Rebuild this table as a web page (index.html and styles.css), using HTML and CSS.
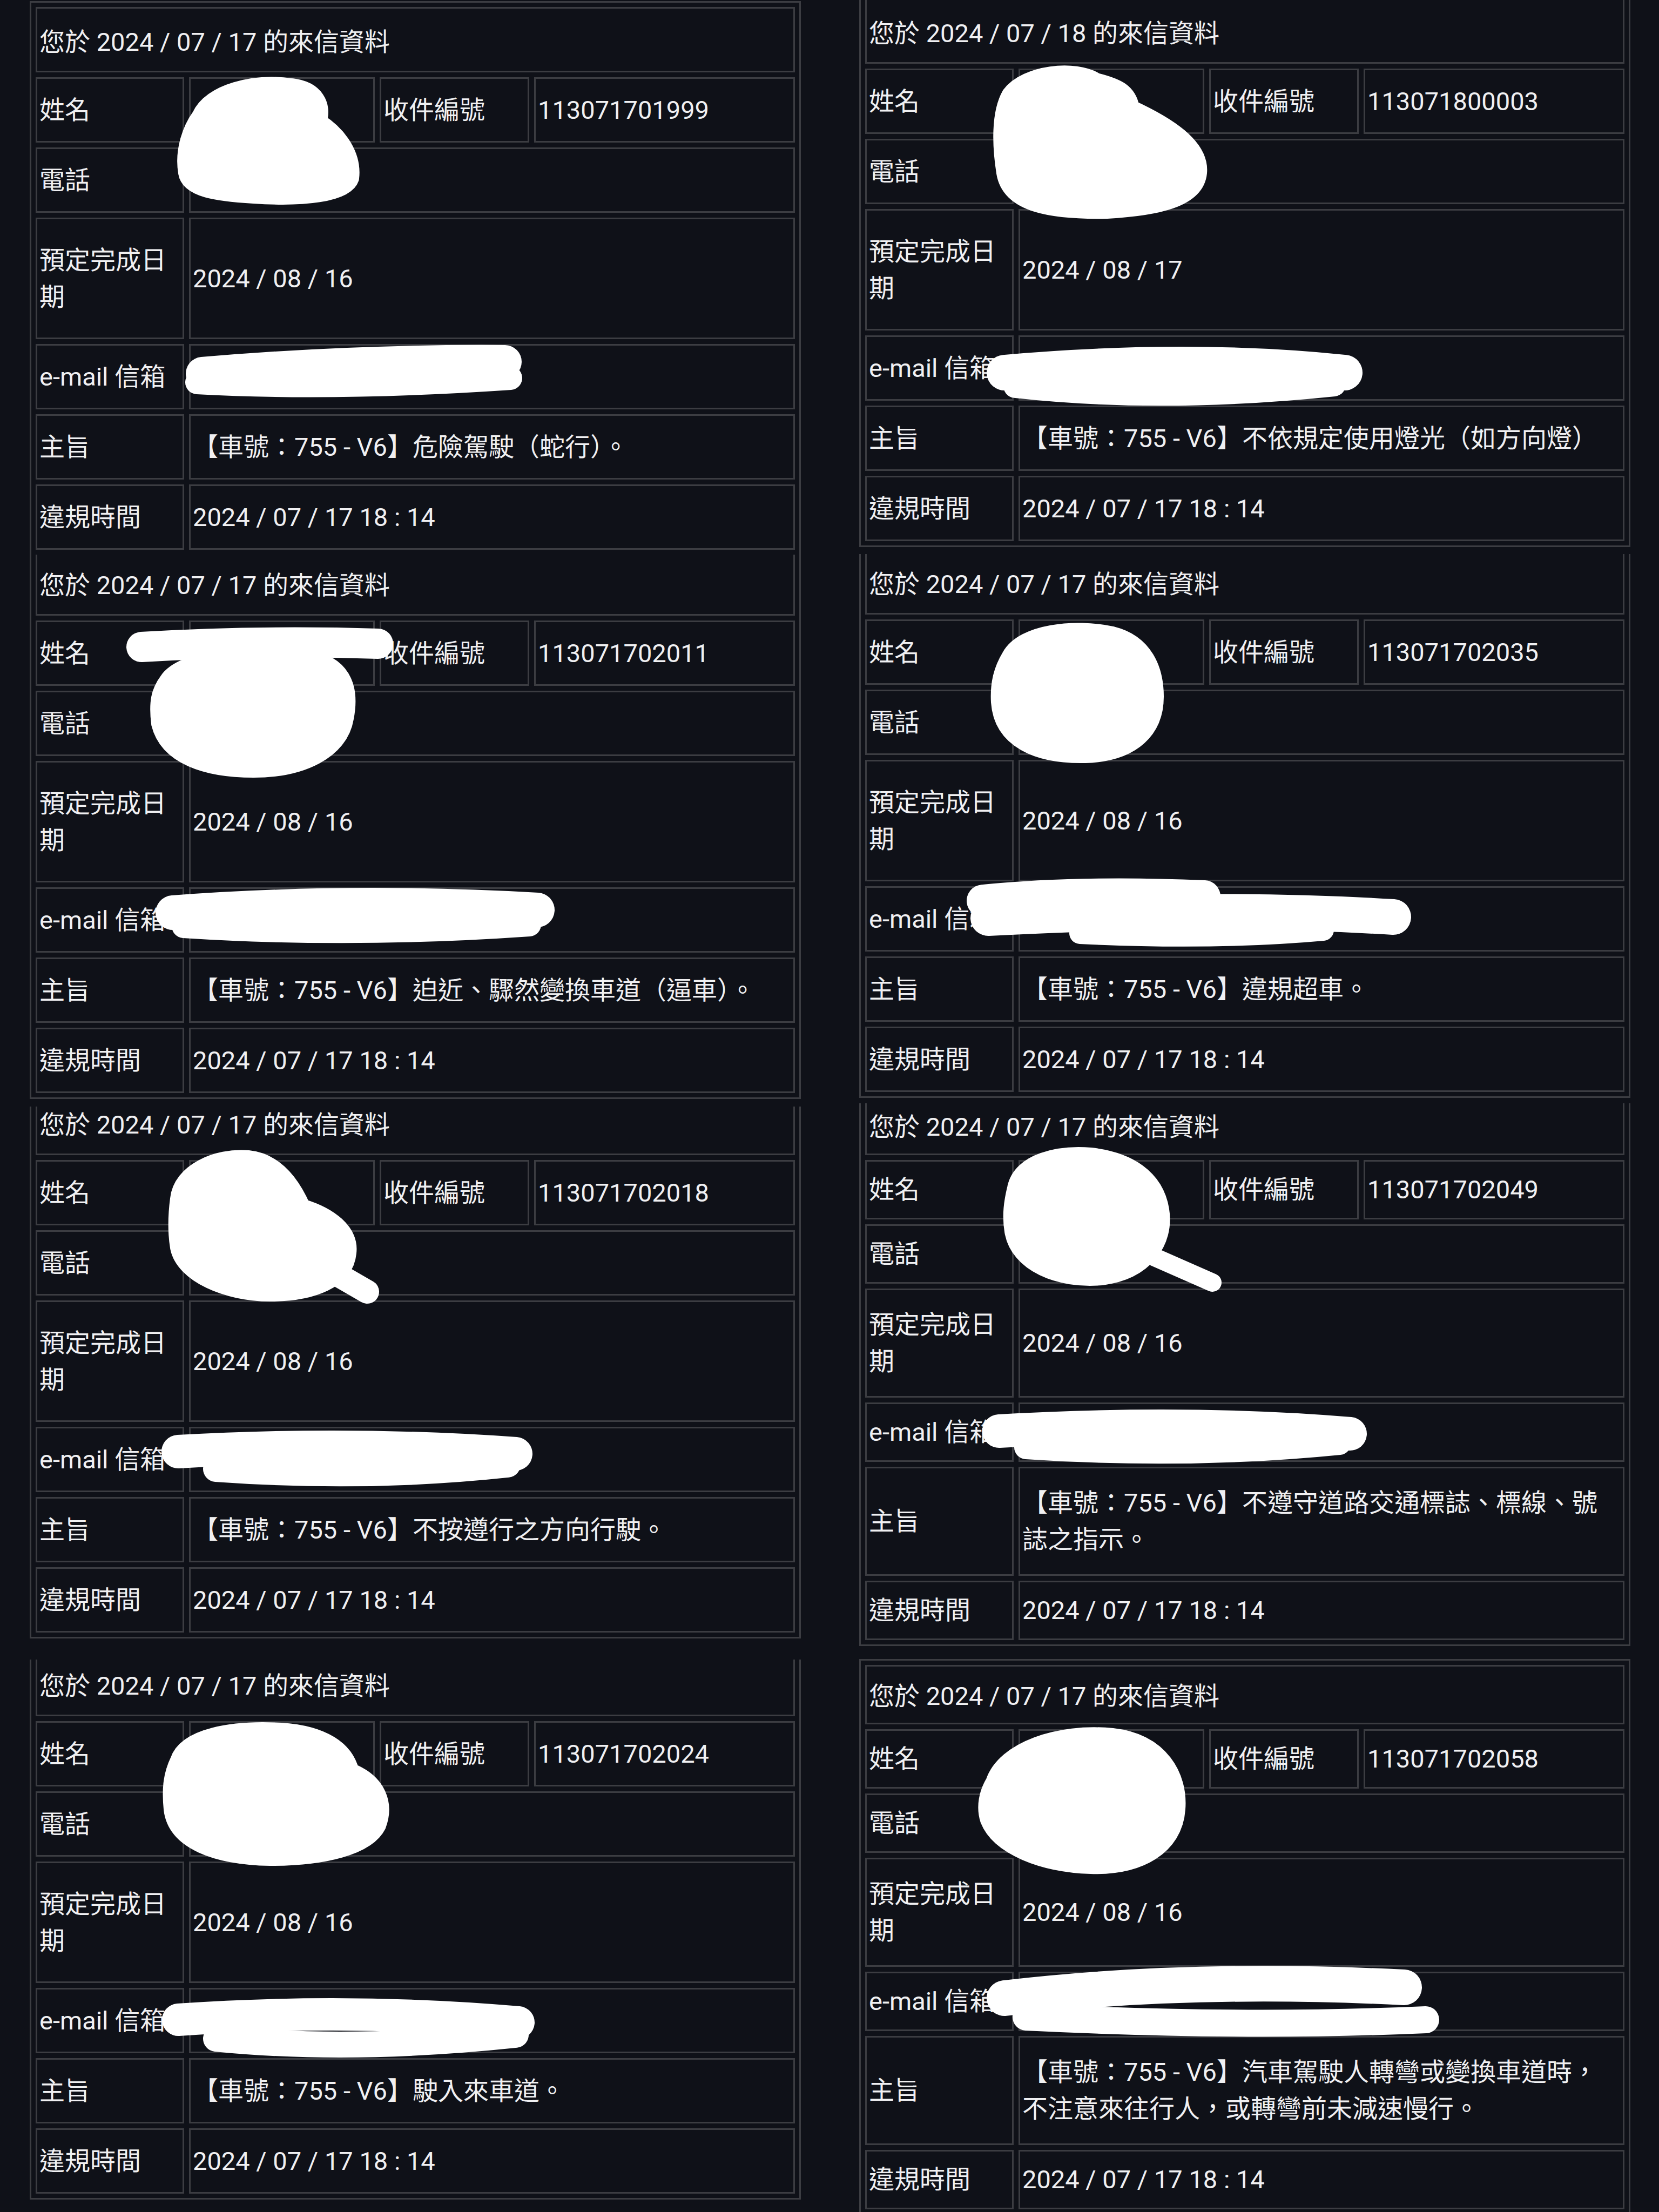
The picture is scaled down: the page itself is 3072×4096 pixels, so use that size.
FILE: index.html
```html
<!DOCTYPE html>
<html lang="zh-Hant">
<head>
<meta charset="utf-8">
<title>來信資料</title>
<link rel="stylesheet" href="styles.css">
</head>
<body>
<div class="page">
  <div class="col col-left">
    <section class="tbl">
      <div class="c title">您於 2024 / 07 / 17 的來信資料</div>
      <div class="c lab">姓名</div><div class="c"></div><div class="c">收件編號</div><div class="c">113071701999</div>
      <div class="c lab">電話</div><div class="c span"></div>
      <div class="c lab tall">預定完成日期</div><div class="c span">2024 / 08 / 16</div>
      <div class="c lab">e-mail 信箱</div><div class="c span"></div>
      <div class="c lab">主旨</div><div class="c span">【車號：755 - V6】危險駕駛（蛇行）。</div>
      <div class="c lab">違規時間</div><div class="c span">2024 / 07 / 17 18 : 14</div>

      <div class="c title cut t113">您於 2024 / 07 / 17 的來信資料</div>
      <div class="c lab">姓名</div><div class="c"></div><div class="c">收件編號</div><div class="c">113071702011</div>
      <div class="c lab">電話</div><div class="c span"></div>
      <div class="c lab tall">預定完成日期</div><div class="c span">2024 / 08 / 16</div>
      <div class="c lab">e-mail 信箱</div><div class="c span"></div>
      <div class="c lab">主旨</div><div class="c span">【車號：755 - V6】迫近、驟然變換車道（逼車）。</div>
      <div class="c lab">違規時間</div><div class="c span">2024 / 07 / 17 18 : 14</div>
    </section>

    <section class="tbl top-cut gap-b">
      <div class="c title cut t90">您於 2024 / 07 / 17 的來信資料</div>
      <div class="c lab">姓名</div><div class="c"></div><div class="c">收件編號</div><div class="c">113071702018</div>
      <div class="c lab">電話</div><div class="c span"></div>
      <div class="c lab tall">預定完成日期</div><div class="c span">2024 / 08 / 16</div>
      <div class="c lab">e-mail 信箱</div><div class="c span"></div>
      <div class="c lab">主旨</div><div class="c span">【車號：755 - V6】不按遵行之方向行駛。</div>
      <div class="c lab">違規時間</div><div class="c span">2024 / 07 / 17 18 : 14</div>
    </section>

    <section class="tbl top-cut gap-c">
      <div class="c title cut t105">您於 2024 / 07 / 17 的來信資料</div>
      <div class="c lab">姓名</div><div class="c"></div><div class="c">收件編號</div><div class="c">113071702024</div>
      <div class="c lab">電話</div><div class="c span"></div>
      <div class="c lab tall">預定完成日期</div><div class="c span">2024 / 08 / 16</div>
      <div class="c lab">e-mail 信箱</div><div class="c span"></div>
      <div class="c lab">主旨</div><div class="c span">【車號：755 - V6】駛入來車道。</div>
      <div class="c lab">違規時間</div><div class="c span">2024 / 07 / 17 18 : 14</div>
    </section>
  </div>

  <div class="col col-right">
    <section class="tbl top-cut">
      <div class="c title cut t118">您於 2024 / 07 / 18 的來信資料</div>
      <div class="c lab">姓名</div><div class="c"></div><div class="c">收件編號</div><div class="c">113071800003</div>
      <div class="c lab">電話</div><div class="c span"></div>
      <div class="c lab tall">預定完成日期</div><div class="c span">2024 / 08 / 17</div>
      <div class="c lab">e-mail 信箱</div><div class="c span"></div>
      <div class="c lab">主旨</div><div class="c span">【車號：755 - V6】不依規定使用燈光（如方向燈）</div>
      <div class="c lab">違規時間</div><div class="c span">2024 / 07 / 17 18 : 14</div>
    </section>

    <section class="tbl top-cut gap-e">
      <div class="c title cut t112">您於 2024 / 07 / 17 的來信資料</div>
      <div class="c lab">姓名</div><div class="c"></div><div class="c">收件編號</div><div class="c">113071702035</div>
      <div class="c lab">電話</div><div class="c span"></div>
      <div class="c lab tall">預定完成日期</div><div class="c span">2024 / 08 / 16</div>
      <div class="c lab">e-mail 信箱</div><div class="c span"></div>
      <div class="c lab">主旨</div><div class="c span">【車號：755 - V6】違規超車。</div>
      <div class="c lab">違規時間</div><div class="c span">2024 / 07 / 17 18 : 14</div>
    </section>

    <section class="tbl compact top-cut gap-f">
      <div class="c title cut t96">您於 2024 / 07 / 17 的來信資料</div>
      <div class="c lab">姓名</div><div class="c"></div><div class="c">收件編號</div><div class="c">113071702049</div>
      <div class="c lab">電話</div><div class="c span"></div>
      <div class="c lab tall">預定完成日期</div><div class="c span">2024 / 08 / 16</div>
      <div class="c lab">e-mail 信箱</div><div class="c span"></div>
      <div class="c lab tall">主旨</div><div class="c span"><span class="lines">【車號：755 - V6】不遵守道路交通標誌、標線、號<br>誌之指示。</span></div>
      <div class="c lab">違規時間</div><div class="c span">2024 / 07 / 17 18 : 14</div>
    </section>

    <section class="tbl compact gap-g">
      <div class="c title">您於 2024 / 07 / 17 的來信資料</div>
      <div class="c lab">姓名</div><div class="c"></div><div class="c">收件編號</div><div class="c">113071702058</div>
      <div class="c lab">電話</div><div class="c span"></div>
      <div class="c lab tall">預定完成日期</div><div class="c span">2024 / 08 / 16</div>
      <div class="c lab">e-mail 信箱</div><div class="c span"></div>
      <div class="c lab tall">主旨</div><div class="c span"><span class="lines">【車號：755 - V6】汽車駕駛人轉彎或變換車道時，<br>不注意來往行人，或轉彎前未減速慢行。</span></div>
      <div class="c lab">違規時間</div><div class="c span">2024 / 07 / 17 18 : 14</div>
    </section>
  </div>

  <svg class="scribbles" width="3072" height="4096" viewBox="0 0 3072 4096" aria-hidden="true">
    <g fill="#fff" stroke="#fff" stroke-linecap="round" stroke-linejoin="round">
      <!-- L1 name/phone -->
      <path stroke-width="30" d="M370 215 C390 170 470 150 540 160 C585 165 600 195 590 225 C630 250 655 290 650 330 C640 360 560 368 470 362 C400 358 350 350 345 320 C338 280 352 240 370 215 Z"/>
      <!-- L1 email -->
      <path fill="none" stroke-width="62" d="M375 692 Q650 668 935 670"/>
      <path fill="none" stroke-width="44" d="M365 708 Q620 722 945 700"/>
      <!-- R1 name/phone -->
      <path stroke-width="30" d="M1870 175 C1900 135 1990 125 2030 150 C2070 160 2090 170 2095 200 C2160 230 2225 270 2220 320 C2215 370 2140 385 2050 390 C1950 392 1870 380 1860 320 C1852 270 1850 210 1870 175 Z"/>
      <!-- R1 email -->
      <path fill="none" stroke-width="66" d="M1860 690 Q2200 660 2490 690"/>
      <path fill="none" stroke-width="44" d="M1880 715 Q2150 745 2470 712"/>
      <!-- L2 name/phone -->
      <path fill="none" stroke-width="56" d="M262 1198 Q480 1185 700 1192"/>
      <path stroke-width="30" d="M310 1260 C340 1215 480 1205 580 1220 C640 1235 650 1280 640 1330 C630 1390 560 1425 470 1425 C380 1425 310 1400 295 1340 C290 1300 295 1280 310 1260 Z"/>
      <!-- L2 email -->
      <path fill="none" stroke-width="64" d="M320 1690 Q650 1665 995 1685"/>
      <path fill="none" stroke-width="44" d="M340 1715 Q650 1735 980 1712"/>
      <!-- R2 name/phone -->
      <path stroke-width="30" d="M1870 1215 C1895 1170 1990 1160 2060 1175 C2120 1190 2140 1240 2140 1290 C2140 1350 2100 1395 2010 1398 C1920 1400 1855 1370 1850 1300 C1848 1265 1855 1240 1870 1215 Z"/>
      <!-- R2 email -->
      <path fill="none" stroke-width="60" d="M1820 1668 Q2000 1650 2230 1660"/>
      <path fill="none" stroke-width="66" d="M1830 1700 Q2250 1678 2580 1698"/>
      <path fill="none" stroke-width="40" d="M2000 1728 Q2250 1740 2450 1722"/>
      <!-- L3 name/phone -->
      <path stroke-width="30" d="M330 2220 C335 2170 400 2140 460 2145 C510 2150 540 2190 560 2235 C610 2250 650 2280 645 2320 C640 2370 580 2395 500 2395 C420 2395 340 2360 330 2310 C325 2280 326 2250 330 2220 Z"/>
      <path fill="none" stroke-width="44" d="M590 2340 L680 2392"/>
      <!-- L3 email -->
      <path fill="none" stroke-width="62" d="M330 2688 Q650 2670 955 2692"/>
      <path fill="none" stroke-width="48" d="M400 2720 Q680 2740 940 2712"/>
      <!-- R3 name/phone -->
      <path stroke-width="30" d="M1880 2200 C1890 2150 1960 2135 2020 2140 C2090 2148 2140 2180 2150 2240 C2160 2300 2120 2355 2040 2365 C1960 2372 1885 2340 1875 2280 C1870 2250 1874 2225 1880 2200 Z"/>
      <path fill="none" stroke-width="34" d="M2120 2320 L2245 2375"/>
      <!-- R3 email -->
      <path fill="none" stroke-width="62" d="M1850 2650 Q2200 2630 2500 2655"/>
      <path fill="none" stroke-width="44" d="M1900 2680 Q2200 2700 2480 2672"/>
      <!-- L4 name/phone -->
      <path stroke-width="30" d="M330 3260 C345 3215 430 3200 520 3205 C600 3210 640 3240 650 3280 C700 3300 715 3340 700 3380 C680 3420 600 3440 500 3440 C400 3438 325 3410 318 3350 C314 3310 318 3285 330 3260 Z"/>
      <!-- L4 email -->
      <path fill="none" stroke-width="60" d="M330 3740 Q650 3718 960 3745"/>
      <path fill="none" stroke-width="48" d="M400 3775 Q650 3800 955 3768"/>
      <!-- R4 name/phone -->
      <path stroke-width="30" d="M1840 3300 C1860 3240 1960 3205 2060 3215 C2150 3225 2185 3290 2180 3350 C2175 3420 2110 3458 2020 3455 C1930 3452 1850 3420 1830 3370 C1822 3345 1828 3320 1840 3300 Z"/>
      <!-- R4 email -->
      <path fill="none" stroke-width="66" d="M1860 3700 Q2200 3660 2600 3680"/>
      <path fill="none" stroke-width="50" d="M1900 3735 Q2300 3755 2640 3740"/>
    </g>
  </svg>
</div>
</body>
</html>
```

FILE: styles.css
```css
html, body {
  margin: 0;
  padding: 0;
  background: #0f1118;
}

.page {
  position: relative;
  width: 3072px;
  height: 4096px;
  overflow: hidden;
  display: flex;
  align-items: flex-start;
  gap: 108px;
  padding-left: 55px;
  box-sizing: border-box;
  font-family: Roboto, "Noto Sans CJK TC", "Noto Sans CJK SC", sans-serif;
  font-size: 47px;
  line-height: 68px;
  color: #f0f0f2;
}

.col {
  width: 1428px;
  display: flex;
  flex-direction: column;
}

.col-left { padding-top: 2px; }

.tbl {
  display: grid;
  grid-template-columns: 275px 344px 277px 1fr;
  column-gap: 9px;
  row-gap: 9px;
  border: 3px solid #3c3d42;
  padding: 8px;
}

.tbl.top-cut {
  border-top: 0;
  padding-top: 0;
}

.gap-b { margin-top: 14px; }
.gap-c { margin-top: 39px; }
.gap-e { margin-top: 13px; }
.gap-f { margin-top: 10px; }
.gap-g { margin-top: 24px; }

.c {
  border: 3px solid #3c3d42;
  padding: 0 4px;
  display: flex;
  align-items: center;
  white-space: nowrap;
  min-width: 0;
}

.c.lab {
  height: 121px;
  box-sizing: border-box;
  white-space: normal;
}

.c.lab.tall { height: 225px; }

.c.span {
  grid-column: 2 / -1;
}

.lines {
  display: block;
}

.c.title {
  grid-column: 1 / -1;
  height: 121px;
  box-sizing: border-box;
  align-items: flex-end;
  padding-bottom: 19px;
}

.c.title.cut { border-top: 0; }
.t90 { height: 90px !important; }
.t96 { height: 96px !important; }
.t105 { height: 105px !important; }
.t112 { height: 112px !important; }
.t113 { height: 113px !important; }
.t118 { height: 118px !important; }

.compact .c.lab { height: 110px; }
.compact .c.lab.tall { height: 202px; }
.compact .c.title { height: 110px; padding-bottom: 15px; }

.scribbles {
  position: absolute;
  left: 0;
  top: 0;
  pointer-events: none;
}
```
